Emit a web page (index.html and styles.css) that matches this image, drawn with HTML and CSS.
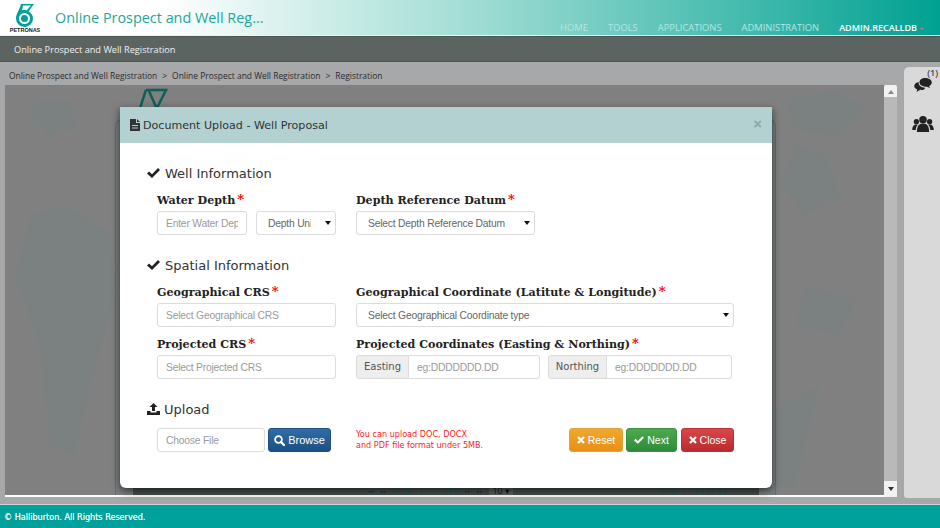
FILE: index.html
```html
<!DOCTYPE html>
<html lang="en">
<head>
    <meta charset="UTF-8">
    <meta name="viewport" content="width=device-width, initial-scale=1.0">
    <title>Online Prospect and Well Registration</title>
    <link rel="stylesheet" href="styles.css">
</head>
<body>
    <!-- top bar -->
    <header class="top-bar">
        <div class="logo">
            <svg class="logo-mark" width="18" height="23" viewBox="0 0 18 23">
                <path d="M5 0H18L12.500 7.500C15.500 9 17 11.500 17 14.500A8.500 8.500 0 0 1 0 14.500C0 10 3 7 5 0Z" fill="#00a19a"/>
                <path d="M7 1.500H15L10.500 6.500C9 6 7.500 6 6 6.300Z" fill="#fff"/>
                <circle cx="8.500" cy="14.500" r="5.500" fill="#fff"/>
                <circle cx="8.500" cy="14.500" r="3.500" fill="#00a19a"/>
            </svg>
            <span class="logo-text">PETRONAS</span>
        </div>
        <div class="app-title">Online Prospect and Well Reg...</div>
        <nav class="top-nav">
            <a href="#">HOME</a>
            <a href="#">TOOLS</a>
            <a href="#">APPLICATIONS</a>
            <a href="#">ADMINISTRATION</a>
            <a href="#" class="nav-user">ADMIN.RECALLDB<span class="nav-caret"></span></a>
        </nav>
    </header>

    <div class="sub-bar">Online Prospect and Well Registration</div>

    <main class="main">
        <div class="content">
            <div class="breadcrumb">
                <span>Online Prospect and Well Registration</span>
                <span>&gt;</span>
                <span>Online Prospect and Well Registration</span>
                <span>&gt;</span>
                <span>Registration</span>
            </div>
            <div class="panel">
                <div class="view">
                    <!-- faint world map behind the page -->
                    <svg class="map" width="879" height="411" viewBox="0 0 879 411">
                        <g fill="#7a8180">
                            <path d="M26 22L42 15L68 17L66 30L72 42L62 48L54 40L46 56L38 44L28 36Z"/>
                            <path d="M25 130L60 120L105 150L110 210L85 300L70 370L45 360L35 260L10 190Z"/>
                            <path d="M780 15L830 5L860 25L835 50L790 45Z"/>
                            <path d="M790 60L820 70L835 110L800 130L775 100Z"/>
                            <path d="M800 200L850 215L835 250L790 240Z"/>
                            <path d="M815 300L790 400L715 410L760 330Z"/>
                        </g>
                    </svg>
                    <svg class="page-logo" width="30" height="20" viewBox="0 0 30 20">
                        <path d="M7 2H27L18 20M7 2L1 20M10 3L17 19" fill="none" stroke="#0e5f57" stroke-width="2.500"/>
                    </svg>
                    <div class="grid-card">
                        <div class="pager">
                            <div class="pager-page">
                                <span class="pager-arrows">&#9666;&#9666;</span>
                                <span class="pager-arrows">&#9666;&#9666;</span>
                                <span>Page</span>
                                <span>1</span>
                                <span class="pager-of">of 6</span>
                                <span class="pager-arrows">&#9656;&#9656;</span>
                                <span class="pager-arrows">&#9656;&#9656;</span>
                                <span class="pager-size">10 &#9662;</span>
                            </div>
                            <span>View 1 - 10 of 54</span>
                        </div>
                    </div>
                </div>
                <div class="scrollbar">
                    <span class="scroll-up"></span>
                    <span class="scroll-thumb"></span>
                    <span class="scroll-down"></span>
                </div>
            </div>
        </div>
        <aside class="side">
            <span class="side-count">(1)</span>
            <svg class="side-icon" width="18" height="14" viewBox="0 0 20 16">
                <path d="M12.500 0C16.500 0 20 2 20 5C20 7 18.500 8.500 17 9.200L18 11.500L14.500 10C11 10 6 8.500 6 5C6 2 8.500 0 12.500 0Z" fill="#222"/>
                <path d="M5 4.500C4.500 8 8 11 12.500 11C12 13 9.500 14 7 13.500L2.500 16L3.500 13C1 12 0 10.500 0 9C0 7 2 5 5 4.500Z" fill="#222"/>
            </svg>
            <svg class="side-icon side-users" width="22" height="16" viewBox="0 0 23 17">
                <g fill="#222">
                    <circle cx="11.500" cy="4" r="4"/>
                    <path d="M5 17C5 11 7 8 11.500 8C16 8 18 11 18 17Z"/>
                    <circle cx="4.500" cy="6" r="2.800"/>
                    <path d="M0 15C0 11 1.500 9 4.500 9C5 9 5.500 9 6 9.300C4.500 10.500 4 12.500 3.800 15Z"/>
                    <circle cx="18.500" cy="6" r="2.800"/>
                    <path d="M23 15C23 11 21.500 9 18.500 9C18 9 17.500 9 17 9.300C18.500 10.500 19 12.500 19.200 15Z"/>
                </g>
            </svg>
        </aside>
    </main>

    <footer class="footer">&copy; Halliburton. All Rights Reserved.</footer>

    <!-- document upload dialog -->
    <div class="modal">
        <div class="modal-header">
            <svg width="10" height="12" viewBox="0 0 10 12">
                <path d="M0 0H6V4H10V12H0ZM7 0L10 3H7Z" fill="#333"/>
                <path d="M2 6H8V7H2ZM2 8.500H8V9.500H2Z" fill="#b2d1d0"/>
            </svg>
            <span class="modal-title">Document Upload - Well Proposal</span>
            <span class="modal-close">&times;</span>
        </div>
        <form class="modal-body">
            <h4 class="section-title">
                <svg class="check" width="13" height="10" viewBox="0 0 13 10"><path d="M0 5.500L2 3.500L5 6.300L11 0L13 2L5 10Z" fill="#222"/></svg>
                Well Information
            </h4>
            <div class="form-row">
                <div class="col-left">
                    <label class="field-label">Water Depth<span class="req">*</span></label>
                    <div class="depth-group">
                        <input class="field depth-input" type="text" placeholder="Enter Water Depth">
                        <div class="select-wrap depth-unit">
                            <select class="field"><option>Depth Unit</option></select>
                        </div>
                    </div>
                </div>
                <div class="col-right">
                    <label class="field-label">Depth Reference Datum<span class="req">*</span></label>
                    <div class="select-wrap datum">
                        <select class="field"><option>Select Depth Reference Datum</option></select>
                    </div>
                </div>
            </div>

            <h4 class="section-title section-gap">
                <svg class="check" width="13" height="10" viewBox="0 0 13 10"><path d="M0 5.500L2 3.500L5 6.300L11 0L13 2L5 10Z" fill="#222"/></svg>
                Spatial Information
            </h4>
            <div class="form-row">
                <div class="col-left">
                    <label class="field-label">Geographical CRS<span class="req">*</span></label>
                    <input class="field" type="text" placeholder="Select Geographical CRS">
                </div>
                <div class="col-right">
                    <label class="field-label">Geographical Coordinate (Latitute &amp; Longitude)<span class="req">*</span></label>
                    <div class="select-wrap">
                        <select class="field"><option>Select Geographical Coordinate type</option></select>
                    </div>
                </div>
            </div>
            <div class="form-row">
                <div class="col-left">
                    <label class="field-label">Projected CRS<span class="req">*</span></label>
                    <input class="field" type="text" placeholder="Select Projected CRS">
                </div>
                <div class="col-right">
                    <label class="field-label">Projected Coordinates (Easting &amp; Northing)<span class="req">*</span></label>
                    <div class="coords">
                        <div class="input-group">
                            <span class="addon addon-east">Easting</span>
                            <input class="field" type="text" placeholder="eg:DDDDDDD.DD">
                        </div>
                        <div class="input-group">
                            <span class="addon addon-north">Northing</span>
                            <input class="field" type="text" placeholder="eg:DDDDDDD.DD">
                        </div>
                    </div>
                </div>
            </div>

            <h4 class="section-title section-gap upload-title">
                <svg class="check" width="13" height="12" viewBox="0 0 13 12"><path d="M6.500 0L10.500 4H8V8H5V4H2.500ZM0 8H3.500V9.500H9.500V8H13V12H0Z" fill="#222"/></svg>
                Upload
            </h4>
            <div class="upload-row">
                <input class="field file-input" type="text" placeholder="Choose File">
                <button type="button" class="btn btn-browse">
                    <svg width="11" height="11" viewBox="0 0 11 11"><circle cx="4.500" cy="4.500" r="3.400" fill="none" stroke="#fff" stroke-width="1.800"/><path d="M7 7L10 10" stroke="#fff" stroke-width="2.200" stroke-linecap="round"/></svg>
                    Browse
                </button>
                <p class="upload-note">You can upload DOC, DOCX<br>and PDF file format under 5MB.</p>
                <div class="actions">
                    <button type="button" class="btn btn-reset">
                        <svg width="8" height="8" viewBox="0 0 8 8"><path d="M1 1L7 7M7 1L1 7" stroke="#fff" stroke-width="2.200"/></svg>
                        Reset
                    </button>
                    <button type="button" class="btn btn-next">
                        <svg width="10" height="8" viewBox="0 0 13 10"><path d="M0 5.500L2 3.500L5 6.300L11 0L13 2L5 10Z" fill="#fff"/></svg>
                        Next
                    </button>
                    <button type="button" class="btn btn-close">
                        <svg width="8" height="8" viewBox="0 0 8 8"><path d="M1 1L7 7M7 1L1 7" stroke="#fff" stroke-width="2.200"/></svg>
                        Close
                    </button>
                </div>
            </div>
        </form>
    </div>
</body>
</html>
```

FILE: styles.css
```css
/* page frame */
body {
    margin: 0;
    width: 940px;
    height: 528px;
    display: flex;
    flex-direction: column;
    overflow: hidden;
    background-color: #a7a8aa;
    font-family: "Open Sans", "Liberation Sans", sans-serif;
    color: #333333;
}

/* top bar */
.top-bar {
    height: 36px;
    box-sizing: border-box;
    display: flex;
    align-items: center;
    border-bottom: 1px solid #e8f5f3;
    background: linear-gradient(to right, #ffffff 0, #ffffff 160px, #9edcd3 480px, #00a192 940px);
}

.logo {
    width: 55px;
    flex-shrink: 0;
    display: flex;
    flex-direction: column;
    align-items: center;
    padding-right: 5px;
    box-sizing: border-box;
}

.logo-mark {
    display: block;
    margin: 3px 0 0 -1px;
}

.logo-text {
    font-family: "Liberation Sans", sans-serif;
    font-size: 5.500px;
    font-weight: bold;
    line-height: 7px;
    color: #222222;
}

.app-title {
    font-size: 14.400px;
    color: #1fa597;
    white-space: nowrap;
}

.top-nav {
    margin-left: auto;
    display: flex;
    align-items: center;
    gap: 20px;
    padding: 20px 16px 0 0;
    font-size: 9.400px;
}

.top-nav a {
    color: #b5e6e0;
    text-decoration: none;
}

.top-nav .nav-user {
    color: #ffffff;
    font-weight: 600;
    font-size: 9px;
}

.nav-caret {
    display: inline-block;
    margin-left: 3px;
    vertical-align: middle;
    border-top: 2px solid #c77;
    border-left: 2px solid transparent;
    border-right: 2px solid transparent;
}

.sub-bar {
    height: 26px;
    box-sizing: border-box;
    padding-left: 14px;
    line-height: 25px;
    font-size: 9.200px;
    color: #f0f0f0;
    background-color: #5c6461;
    border-top: 1px solid #4e5654;
    border-bottom: 1px solid #4e5654;
}

/* main area */
.main {
    flex: 1;
    display: flex;
    min-height: 0;
}

.content {
    flex: 1;
    display: flex;
    flex-direction: column;
    min-width: 0;
    padding-bottom: 7px;
}

.breadcrumb {
    height: 23px;
    box-sizing: border-box;
    padding: 7px 0 0 9px;
    display: flex;
    gap: 5px;
    font-size: 8.450px;
    line-height: 14px;
    color: #2b2b2b;
}

.panel {
    flex: 1;
    display: flex;
    min-height: 0;
    margin-left: 5px;
}

.view {
    flex: 1;
    position: relative;
    background-color: #808080;
    border-bottom: 2px solid #ffffff;
    overflow: hidden;
}

.map {
    position: absolute;
    left: 0;
    top: 0;
}

.page-logo {
    position: absolute;
    left: 134px;
    top: 3px;
}

.grid-card {
    position: absolute;
    left: 110px;
    top: 35px;
    width: 661px;
    height: 376px;
    box-sizing: border-box;
    border: 1px solid #4f7775;
    border-radius: 5px 5px 0 0;
    background-color: #7b7f7f;
}

.pager {
    position: absolute;
    left: 17px;
    right: 16px;
    bottom: 0;
    height: 12px;
    display: flex;
    justify-content: space-between;
    padding: 0 32px 0 235px;
    background-color: #47514f;
    font-size: 9px;
    line-height: 16px;
    color: #1d5a50;
}

.pager-page {
    display: flex;
    gap: 6px;
}

.pager-arrows {
    font-size: 5px;
    color: #243331;
}

.pager-of {
    margin-left: 14px;
}

.pager-size {
    color: #151515;
    background-color: #5d6462;
    padding: 0 3px;
}

.scrollbar {
    width: 13px;
    margin-bottom: 0;
    display: flex;
    flex-direction: column;
    align-items: center;
    background-color: #f2f2f2;
    border-radius: 2px 2px 0 0;
}

.scroll-up {
    margin-top: 5px;
    border-bottom: 4px solid #8a8a8a;
    border-left: 3px solid transparent;
    border-right: 3px solid transparent;
}

.scroll-thumb {
    width: 100%;
    flex: 1;
    margin: 3px 0 6px;
    background-color: #b9b9b9;
}

.scroll-down {
    margin-bottom: 6px;
    border-top: 4px solid #333333;
    border-left: 3px solid transparent;
    border-right: 3px solid transparent;
}

/* right hand tools */
.side {
    width: 36px;
    margin: 5px 0 6px 7px;
    position: relative;
    display: flex;
    flex-direction: column;
    align-items: center;
    padding-left: 1px;
    box-sizing: border-box;
    background-color: #d9d9d9;
    border-radius: 5px 0 0 3px;
}

.side-count {
    position: absolute;
    right: 2px;
    top: 0;
    font-size: 9px;
    line-height: 11px;
    font-weight: 600;
    color: #3a4a5a;
}

.side-icon {
    display: block;
    margin-top: 11px;
}

.side .side-users {
    margin-top: 24px;
}

/* footer */
.footer {
    height: 24px;
    padding-left: 4px;
    line-height: 25px;
    font-family: "DejaVu Sans", sans-serif;
    font-size: 8.100px;
    text-shadow: 0 0 0.5px #ffffff;
    color: #e8f6f5;
    background-color: #00a19a;
    border-top: 1px solid #cfd3d3;
    box-sizing: border-box;
}

/* dialog */
.modal {
    position: absolute;
    left: 120px;
    top: 107px;
    width: 652px;
    height: 381px;
    background-color: #ffffff;
    border-radius: 0 0 6px 6px;
    box-shadow: 0 3px 9px rgba(0, 0, 0, 0.6);
}

.modal-header {
    height: 36px;
    box-sizing: border-box;
    padding: 0 10px;
    display: flex;
    align-items: center;
    gap: 3px;
    background-color: #b2d1d0;
}

.modal-title {
    font-family: "DejaVu Sans", sans-serif;
    font-size: 11.100px;
    color: #333333;
}

.modal-close {
    margin-left: auto;
    margin-bottom: 3px;
    font-family: "Liberation Sans", sans-serif;
    font-size: 15px;
    font-weight: bold;
    color: #8ea6a6;
}

.modal-body {
    padding: 20px 38px 0 27px;
}

.section-title {
    display: flex;
    align-items: center;
    gap: 5px;
    height: 20px;
    margin: 0;
    font-family: "DejaVu Sans", sans-serif;
    font-size: 13px;
    font-weight: normal;
    color: #333333;
}

.section-gap {
    margin-top: 20px;
}

.upload-title {
    gap: 4px;
}

.form-row {
    display: flex;
    gap: 20px;
    margin-top: 9px;
    padding-left: 10px;
}

.col-left {
    width: 179px;
    flex-shrink: 0;
}

.col-right {
    flex: 1;
}

.field-label {
    display: block;
    height: 18px;
    margin-bottom: 1px;
    font-family: "DejaVu Serif", serif;
    font-size: 11.100px;
    font-weight: bold;
    line-height: 18px;
    color: #222222;
    white-space: nowrap;
}

.req {
    margin-left: 2px;
    color: #ff0000;
    font-size: 13px;
    line-height: 14px;
}

.field {
    display: block;
    width: 100%;
    height: 24px;
    box-sizing: border-box;
    padding: 0 8px;
    border: 1.500px solid #dcdcdc;
    border-radius: 3px;
    background-color: #ffffff;
    font-family: "Liberation Sans", sans-serif;
    font-size: 10.300px;
    letter-spacing: -0.2px;
    color: #666666;
    outline: none;
}

.field::placeholder {
    color: #9a9a9a;
    opacity: 1;
}

select.field {
    appearance: none;
    padding-left: 11px;
}

.select-wrap {
    position: relative;
}

/* small black arrow on the select boxes */
.select-wrap::after {
    content: "";
    position: absolute;
    right: 5px;
    top: 10px;
    border-top: 4px solid #111111;
    border-left: 3px solid transparent;
    border-right: 3px solid transparent;
}

.depth-group {
    display: flex;
    justify-content: space-between;
}

.depth-input {
    width: 90px;
}

.depth-unit {
    width: 80px;
}

.depth-unit select {
    padding-right: 24px;
}

.datum {
    width: 179px;
}

.coords {
    display: flex;
    gap: 8px;
}

.input-group {
    width: 184px;
    display: flex;
}

.input-group .field {
    flex: 1;
    min-width: 0;
    width: auto;
    border-left: 0;
    border-radius: 0 3px 3px 0;
}

.addon {
    height: 24px;
    box-sizing: border-box;
    flex-shrink: 0;
    border: 1.500px solid #dcdcdc;
    border-radius: 3px 0 0 3px;
    background-color: #eeeeee;
    text-align: center;
    font-family: "DejaVu Sans", sans-serif;
    font-size: 10px;
    line-height: 21px;
    color: #555555;
}

.addon-east {
    width: 53px;
}

.addon-north {
    width: 59px;
}

.upload-row {
    display: flex;
    align-items: center;
    height: 24px;
    margin-top: 9px;
    padding-left: 10px;
}

.file-input {
    width: 108px;
}

.btn {
    height: 24px;
    box-sizing: border-box;
    padding: 0;
    display: flex;
    align-items: center;
    justify-content: center;
    gap: 3px;
    border-radius: 3px;
    border: 1px solid transparent;
    font-family: "Liberation Sans", sans-serif;
    font-size: 10.500px;
    color: #ffffff;
}

.btn-browse {
    width: 63px;
    margin-left: 3px;
    background: linear-gradient(#2f6ea5, #1c4f85);
    border-color: #1c4f85;
    font-size: 11px;
}

.upload-note {
    margin: 0 0 0 25px;
    font-family: "DejaVu Sans", sans-serif;
    font-size: 8.100px;
    line-height: 11px;
    color: #ff1a1a;
    white-space: nowrap;
}

.actions {
    margin-left: auto;
    display: flex;
    gap: 3px;
}

.btn-reset {
    width: 54px;
    background: linear-gradient(#f0a830, #e88f14);
    border-color: #e4a13c;
}

.btn-next {
    width: 51px;
    background: linear-gradient(#4caa4c, #2f8b3a);
    border-color: #3b8f43;
}

.btn-close {
    width: 53px;
    margin-left: 1px;
    background: linear-gradient(#d8474a, #bb2a2e);
    border-color: #b93035;
}
```
